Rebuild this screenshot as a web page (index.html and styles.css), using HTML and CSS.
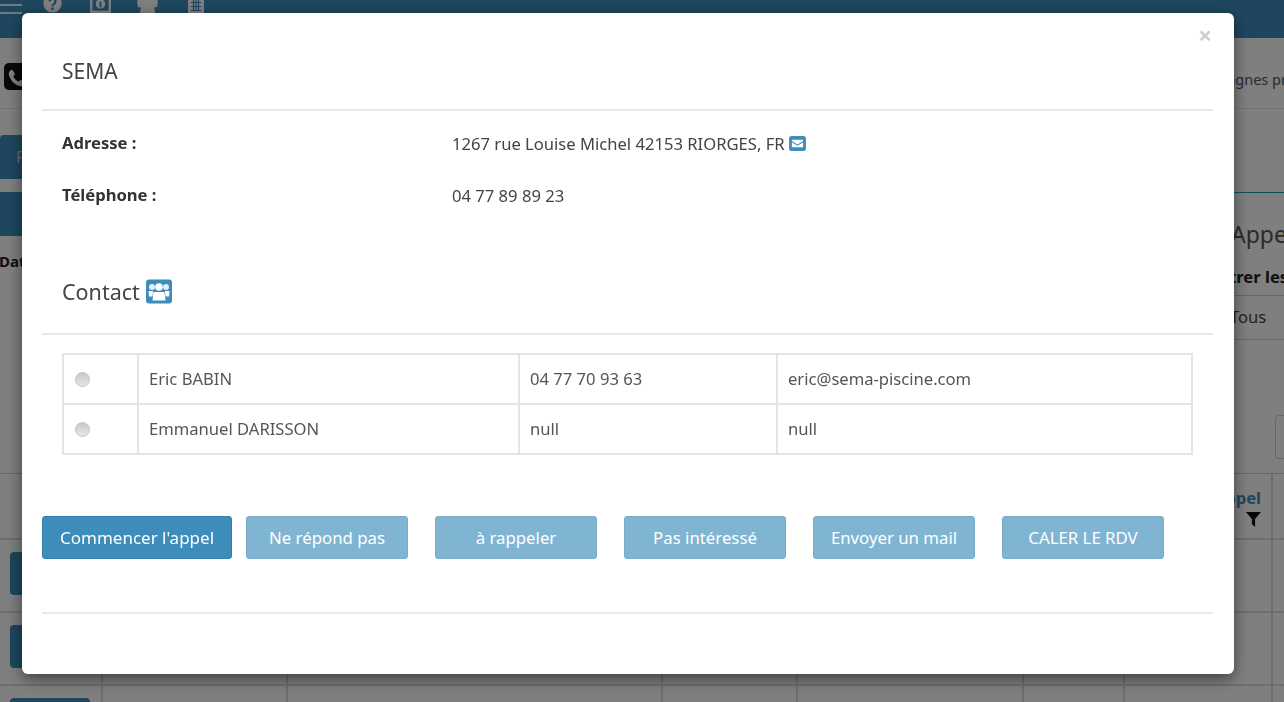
FILE: index.html
```html
<!DOCTYPE html>
<html lang="fr">
<head>
<meta charset="utf-8">
<title>SEMA</title>
<link rel="stylesheet" href="styles.css">
</head>
<body>
<div class="page">
  <header class="topbar">
    <div class="burger"><span></span><span></span></div>
    <nav class="topicons">
      <svg class="ti" viewBox="0 0 24 24"><circle cx="12" cy="12" r="11.500" fill="#fff"/><path d="M8.500 9.500a3.600 3.600 0 1 1 5.600 3c-1.300.9-2.100 1.500-2.100 3" fill="none" stroke="#3c8dbc" stroke-width="2.800"/><rect x="10.400" y="17" width="3.200" height="3.200" fill="#3c8dbc"/></svg>
      <svg class="ti wide" viewBox="0 0 22 20"><path fill="#fff" d="M0 1h22v19H0z"/><path fill="#3c8dbc" d="M2.500 3.500h17v14h-17z"/><circle cx="11" cy="10.500" r="5" fill="#fff"/><path d="M10 8h2v6h-2z" fill="#3c8dbc"/></svg>
      <svg class="ti wide crowd" viewBox="0 0 22 20"><circle cx="11" cy="7" r="6" fill="#fff"/><circle cx="4" cy="8" r="3.800" fill="#fff"/><circle cx="18" cy="8" r="3.800" fill="#fff"/><path fill="#fff" d="M0 9h22l-1 5h-3l1 6H3l1-6H1z"/></svg>
      <svg class="ti narrow" viewBox="0 0 16 24"><path fill="#fff" d="M0 0h16v24H0z"/><path stroke="#3c8dbc" stroke-width="1.200" d="M3 4.500h10M3 8.500h10M3 12.500h10M3 16.500h10M5.500 2v15M8 2v15M10.500 2v15"/><path fill="#3c8dbc" d="M6 19h4v5H6z"/></svg>
    </nav>
  </header>
  <section class="titlebar">
    <span class="phone"><svg viewBox="0 0 24 24"><path fill="#fff" d="M7 4l3 5-2 2c1 3 3 5 6 6l2-2 5 3c-1 3-3 4-5 4C10 22 3 14 3 8c0-2 2-4 4-4z"/></svg></span>
    <span class="crumb">Campagnes pr</span>
  </section>
  <section class="main">
    <div class="left">
      <div class="tab">F</div>
      <div class="bar"></div>
      <div class="da">Date</div>
    </div>
    <aside class="right">
      <div class="appe">Appel</div>
      <div class="filter">Filtrer les</div>
      <div class="tous">Tous</div>
      <div class="smallbox"></div>
    </aside>
  </section>
  <div class="grid">
    <div class="row head">
      <div class="c c1"></div><div class="c c2"></div><div class="c c3"></div><div class="c c4"></div><div class="c c5"></div><div class="c c6"></div>
      <div class="c c7 heading">Appel<svg class="funnel" viewBox="0 0 14 14"><path fill="#111" d="M0 0h14L8.500 6.500V14L5.500 11.500V6.500z"/></svg></div>
      <div class="c c8"></div>
    </div>
    <div class="row"><div class="c c1"><span class="rowbtn"></span></div><div class="c c2"></div><div class="c c3"></div><div class="c c4"></div><div class="c c5"></div><div class="c c6"></div><div class="c c7"></div><div class="c c8"></div></div>
    <div class="row"><div class="c c1"><span class="rowbtn"></span></div><div class="c c2"></div><div class="c c3"></div><div class="c c4"></div><div class="c c5"></div><div class="c c6"></div><div class="c c7"></div><div class="c c8"></div></div>
    <div class="row"><div class="c c1"><span class="rowbtn"></span></div><div class="c c2"></div><div class="c c3"></div><div class="c c4"></div><div class="c c5"></div><div class="c c6"></div><div class="c c7"></div><div class="c c8"></div></div>
  </div>
</div>

<div class="backdrop"></div>

<div class="modal">
  <span class="close">×</span>
  <h4 class="title">SEMA</h4>
  <hr class="rule">
  <div class="info">
    <div class="label">Adresse :</div>
    <div class="value">1267 rue Louise Michel 42153 RIORGES, FR
      <svg class="mail" viewBox="0 0 18 16"><rect width="18" height="16" rx="3" fill="#3c8dbc"/><path fill="#fff" d="M3 4h12v1.200L9 9 3 5.200zM3 6.700L9 10.500l6-3.800V12H3z"/></svg>
    </div>
    <div class="label">Téléphone :</div>
    <div class="value">04 77 89 89 23</div>
  </div>
  <h4 class="title contact">Contact
    <svg class="people-badge" viewBox="0 0 26 24"><rect width="26" height="24" rx="3" fill="#3c8dbc"/><circle cx="13" cy="7.500" r="3.800" fill="#fff"/><circle cx="6" cy="7.500" r="3" fill="#e4eff6"/><circle cx="20" cy="7.500" r="3" fill="#e4eff6"/><path fill="#fff" d="M7.500 12.500h11l1 8.500h-13zM2.500 11.500H7l-.5 5.500H3zM19 11.500h4.500L23 17h-3.500z"/></svg>
  </h4>
  <hr class="rule">
  <table class="contacts">
    <tr>
      <td class="pick"><span class="radio"></span></td>
      <td class="name">Eric BABIN</td>
      <td class="tel">04 77 70 93 63</td>
      <td>eric@sema-piscine.com</td>
    </tr>
    <tr>
      <td class="pick"><span class="radio"></span></td>
      <td class="name">Emmanuel DARISSON</td>
      <td class="tel">null</td>
      <td>null</td>
    </tr>
  </table>
  <div class="actions">
    <button class="btn first">Commencer l'appel</button>
    <button class="btn off">Ne répond pas</button>
    <button class="btn off">à rappeler</button>
    <button class="btn off">Pas intéressé</button>
    <button class="btn off">Envoyer un mail</button>
    <button class="btn off">CALER LE RDV</button>
  </div>
  <hr class="rule">
</div>
</body>
</html>
```
FILE: styles.css
```css
* { box-sizing: border-box; }
html, body { margin: 0; height: 100%; overflow: hidden; }
body { font-family: "Noto Sans", "Lato", sans-serif; font-size: 16.600px; color: #444; background: #fff; }

.page { height: 702px; overflow: hidden; display: flex; flex-direction: column; }

.topbar { height: 38px; flex: none; background: #3c8dbc; display: flex; overflow: hidden; border-bottom: 1px solid #3f87b0; }
.burger { width: 22px; padding-top: 4px; display: flex; flex-direction: column; gap: 6px; }
.burger span { height: 2px; background: #fff; opacity: .85; }
.topicons { display: flex; gap: 28px; margin: -6px 0 0 21px; align-items: flex-start; }
.ti { width: 19px; height: 19px; flex: none; }
.ti.wide { width: 21px; height: 19px; }
.ti.crowd { margin-left: -2px; }
.ti.narrow { width: 16px; height: 24px; margin-left: 2px; }

.titlebar { height: 71px; flex: none; display: flex; justify-content: space-between; align-items: flex-start; border-bottom: 1px solid #e4e4e4; padding: 25px 0 0 4px; white-space: nowrap; }
.phone { width: 26px; height: 27px; border-radius: 5px; background: #111; display: flex; align-items: center; justify-content: center; }
.phone svg { width: 22px; height: 22px; }
.crumb { margin-right: -3px; padding-top: 6px; font-size: 14.500px; color: #555; }

.main { height: 365px; flex: none; display: flex; justify-content: space-between; border-bottom: 1px solid #ccc; }
.left { width: 60px; padding-top: 26px; }
.tab { height: 44px; width: 60px; background: #3c8dbc; border-radius: 4px 0 0 0; color: #ddd; padding: 10px 0 0 16px; }
.bar { height: 44px; width: 60px; margin-top: 13px; background: #3c8dbc; }
.da { margin-top: 15px; font-weight: 700; font-size: 15px; color: #222; white-space: nowrap; margin-left: -1px; }

.right { width: 300px; margin-top: 83px; border-top: 1px solid #19a0b8; padding-left: 247px; white-space: nowrap; overflow: hidden; }
.appe { font-size: 23px; line-height: 30px; margin-top: 26px; color: #555; }
.filter { font-weight: 700; color: #222; margin: 16px 0 0 -21px; line-height: 24px; }
.tous { margin: 6px 0 0 -40px; padding: 9px 0 10px 39px; width: 250px; border-top: 1px solid #ccc; border-bottom: 1px solid #ccc; line-height: 24px; }
.smallbox { margin: 75px 0 0 44px; width: 60px; height: 44px; border: 1px solid #ccc; border-radius: 4px; }

.grid { flex: 1; }
.row { display: flex; height: 73px; border-bottom: 2px solid #ddd; }
.row.head { height: 66px; }
.c { border-right: 2px solid #ddd; flex: none; padding-left: 10px; }
.c1 { width: 103px; padding-top: 12px; }
.c2 { width: 185px; }
.c3 { width: 375px; }
.c4 { width: 135px; }
.c5 { width: 226px; }
.c6 { width: 101px; }
.c7 { width: 148px; }
.c8 { flex: 1; border-right: 0; }
.heading { color: #3c8dbc; font-weight: 700; padding: 13px 10px 0 0; text-align: right; line-height: 22px; }
.funnel { display: block; width: 15px; height: 15px; margin: 3px 0 0 auto; }
.rowbtn { display: block; width: 80px; height: 43px; background: #3c8dbc; border-radius: 4px; }

.backdrop { position: fixed; inset: 0; background: rgba(0,0,0,.5); }

.modal { position: fixed; left: 22px; top: 13px; width: 1212px; height: 661px; background: #fff; border-radius: 6px; box-shadow: 0 5px 15px rgba(0,0,0,.5); padding: 0 21px 0 20px; }
.close { position: absolute; right: 22px; top: 7px; font-size: 24px; font-weight: 700; color: #ccc; line-height: 30px; }
.title { margin: 0; padding: 45px 20px 0; height: 96px; font-size: 21px; font-weight: 400; line-height: 26px; color: #444; }
.rule { margin: 0; height: 2px; border: 0; background: #e9e9e9; }

.info { display: grid; grid-template-columns: 390px 1fr; grid-auto-rows: 52px; padding: 19px 20px 0; line-height: 26px; height: 154px; align-content: start; }
.label { font-weight: 700; color: #333; }
.value { padding-top: 1px; }
.mail { width: 17px; height: 15px; vertical-align: -1px; }

.contact { height: 68px; padding-top: 14px; font-size: 21.500px; }
.people-badge { width: 26px; height: 25px; vertical-align: -4px; margin-left: 1px; }

.contacts { margin: 18px 0 0 20px; width: 1131px; border-collapse: collapse; table-layout: fixed; }
.contacts td { border: 2px solid #e4e4e4; height: 50px; padding: 0 10px 2px; color: #555; }
.contacts .pick { width: 75px; padding-bottom: 0; }
.name { width: 381px; }
.tel { width: 258px; }
.radio { display: block; width: 15px; height: 15px; border-radius: 50%; border: 1px solid #c4c4c4; background: linear-gradient(#c8c8c8, #e8e8e8); margin-left: 1px; }

.actions { display: flex; gap: 27px; margin-top: 61px; margin-bottom: 53px; }
.btn { width: 162px; height: 43px; font: inherit; font-size: 16.800px; color: #fff; background: #3c8dbc; border: 1px solid #367fa9; border-radius: 3px; padding: 0; }
.btn.first { width: 190px; margin-right: -13px; font-size: 17px; }
.btn.off { opacity: .65; }
```
